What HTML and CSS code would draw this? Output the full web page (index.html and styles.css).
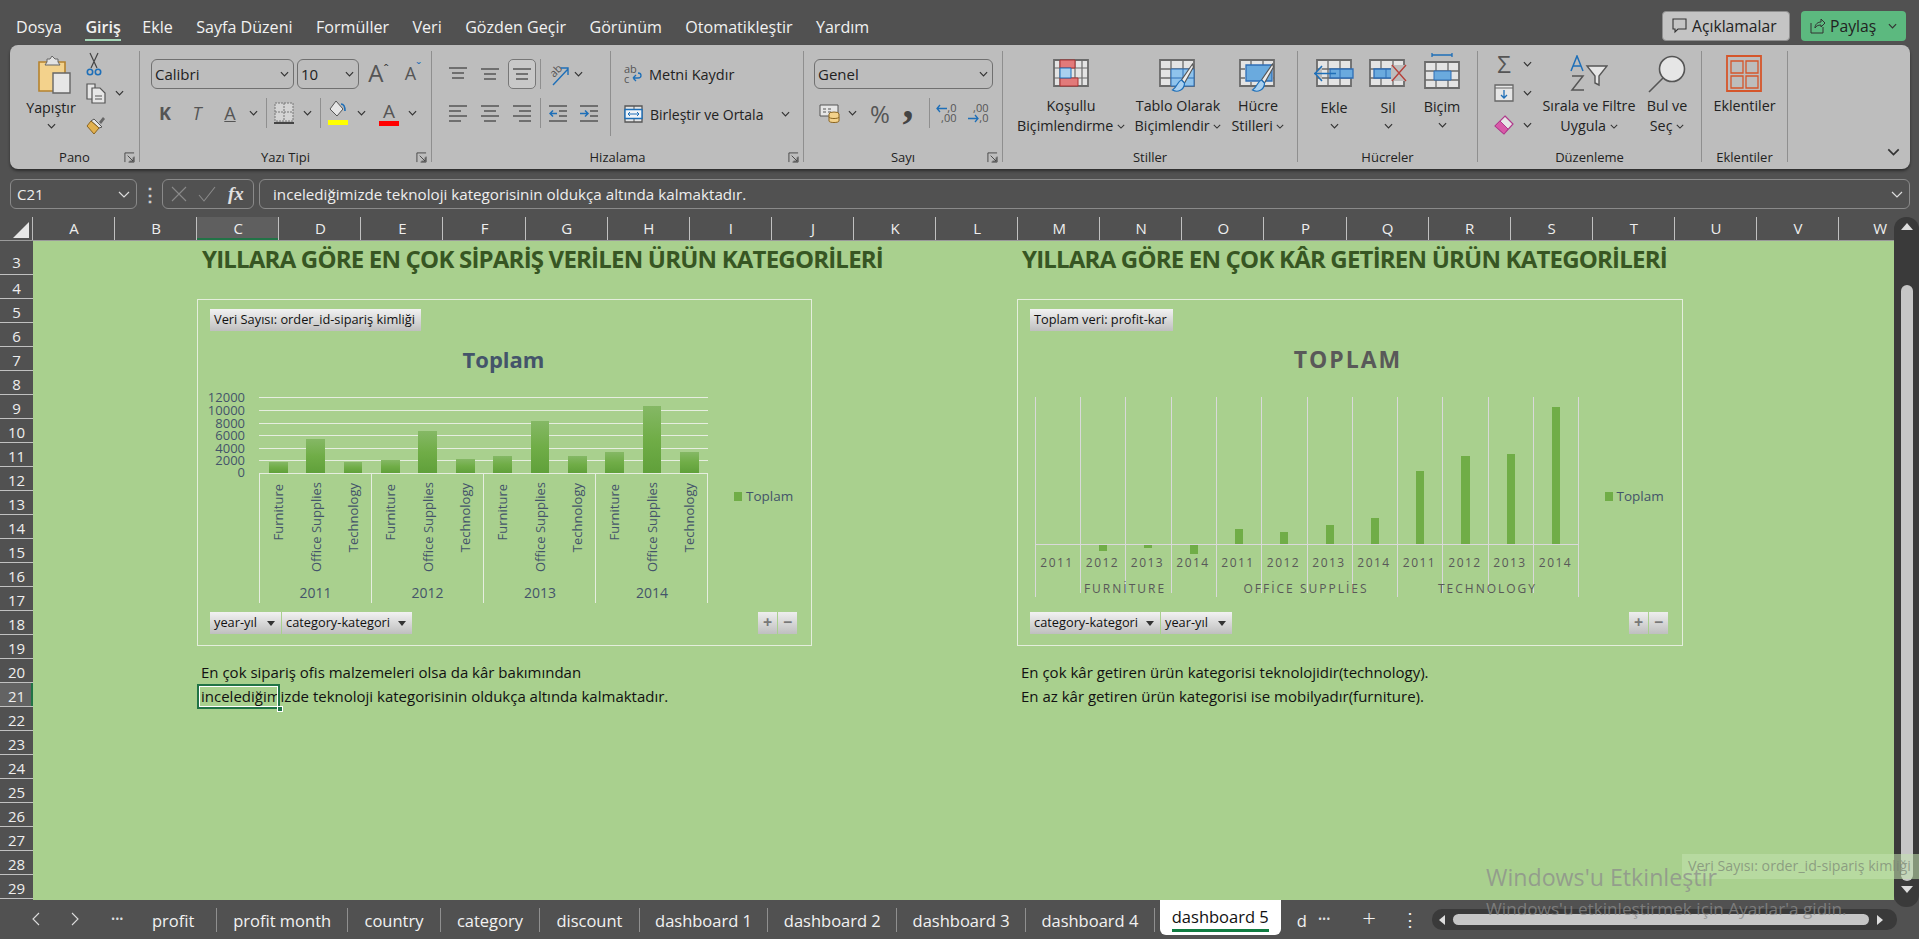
FILE: index.html
```html
<!DOCTYPE html>
<html lang="tr">
<head>
    <meta charset="UTF-8">
    <title>Excel - dashboard 5</title>
    <link rel="stylesheet" href="styles.css">
</head>
<body>
    <svg class="defs" width="0" height="0">
        <symbol id="chev" viewBox="0 0 10 6"><path d="M1 1l4 4 4-4" fill="none" stroke="#333" stroke-width="1.3"/></symbol>
        <symbol id="launch" viewBox="0 0 12 12"><path d="M1 11V1h10M11 5v6H5M4 4l6 6M10 6v4H6" fill="none" stroke="#444" stroke-width="1"/></symbol>
        <symbol id="al-top" viewBox="0 0 18 14"><path d="M0 1h18M3 6h12M3 11h12" stroke="#555" stroke-width="1.6"/></symbol>
        <symbol id="al-mid" viewBox="0 0 18 14"><path d="M0 2h18M3 7h12M3 12h12" stroke="#555" stroke-width="1.6"/></symbol>
        <symbol id="al-left" viewBox="0 0 18 17"><path d="M0 1h18M0 6h12M0 11h18M0 16h12" stroke="#555" stroke-width="1.6"/></symbol>
        <symbol id="al-center" viewBox="0 0 18 17"><path d="M0 1h18M3 6h12M0 11h18M3 16h12" stroke="#555" stroke-width="1.6"/></symbol>
        <symbol id="al-right" viewBox="0 0 18 17"><path d="M0 1h18M6 6h12M0 11h18M6 16h12" stroke="#555" stroke-width="1.6"/></symbol>
        <symbol id="cells" viewBox="0 0 36 28"><path fill="#e4e4e4" stroke="#6b6b6b" stroke-width="1.8" d="M1 1h34v26H1z"/><path d="M12 1v26M24 1v26M1 10h34M1 19h34" stroke="#6b6b6b" stroke-width="1.3"/></symbol>
        <symbol id="brush" viewBox="0 0 22 30"><path d="M21 1L10 17l3 3L22 4z" fill="#ececec" stroke="#555" stroke-width="1.1"/><path d="M10 17c-4 1-4 7-9 10 5 3 12 0 12-7z" fill="#a9d0f0" stroke="#1e6fb8" stroke-width="1.2"/></symbol>
    </svg>

    <!-- top menu -->
    <header class="topbar">
        <nav class="menu">
            <span>Dosya</span>
            <span class="menu-active">Giriş</span>
            <span>Ekle</span>
            <span>Sayfa Düzeni</span>
            <span>Formüller</span>
            <span>Veri</span>
            <span>Gözden Geçir</span>
            <span>Görünüm</span>
            <span>Otomatikleştir</span>
            <span>Yardım</span>
        </nav>
        <button class="btn-comments">
            <svg width="15" height="16" viewBox="0 0 15 16"><path d="M1 1h13v10H6l-3 3v-3H1z" fill="none" stroke="#333" stroke-width="1.1"/></svg>
            Açıklamalar
        </button>
        <button class="btn-share">
            <svg width="15" height="16" viewBox="0 0 15 16"><path d="M1 5v10h12V9M5 10c0-4 3-6 6-6V1l4 4-4 4V7c-3 0-5 1-6 3z" fill="none" stroke="#333" stroke-width="1"/></svg>
            Paylaş
            <svg class="share-chev" width="9" height="6"><use href="#chev"/></svg>
        </button>
    </header>

    <!-- ribbon -->
    <section class="ribbon">
        <div class="group g-pano">
            <div class="group-body pano-body">
                <div class="paste">
                    <svg width="33" height="39" viewBox="0 0 33 39">
                        <path d="M1 7h26v29H1z" fill="#f3d28c" stroke="#b5832f" stroke-width="1.6"/>
                        <path d="M9 7V4h3l2-3 3 3h3v3l2 3H7z" fill="#e2e2e2" stroke="#666"/>
                        <path d="M15 18h17v20H15z" fill="#e6e6e6" stroke="#666" stroke-width="1.4"/>
                    </svg>
                    <span class="tool-text">Yapıştır</span>
                    <svg class="chev-m" width="9" height="6"><use href="#chev"/></svg>
                </div>
                <div class="mini-col">
                    <div class="mini-row">
                        <svg width="16" height="24" viewBox="0 0 16 24"><path d="M4 1l7 15M12 1L5 16" stroke="#444" stroke-width="1.2"/><circle cx="4" cy="20" r="2.7" fill="none" stroke="#1e6fb8" stroke-width="1.6"/><circle cx="12" cy="20" r="2.7" fill="none" stroke="#1e6fb8" stroke-width="1.6"/></svg>
                    </div>
                    <div class="mini-row">
                        <svg width="20" height="21" viewBox="0 0 20 21"><path d="M1 1h8v15H1z" fill="#e6e6e6" stroke="#555" stroke-width="1.2"/><path d="M6 5h8l5 5v10H6z" fill="#e6e6e6" stroke="#555" stroke-width="1.2"/><path d="M9 13h7M9 16h7" stroke="#555"/></svg>
                        <svg class="chev-r" width="9" height="6"><use href="#chev"/></svg>
                    </div>
                    <div class="mini-row">
                        <svg width="20" height="20" viewBox="0 0 20 20"><path d="M13 7l4-5 2 2-4 5z" fill="#666"/><path d="M8 4l8 8-3 1-8-7z" fill="#e6e6e6" stroke="#555"/><path d="M5 6L1 11l7 8 5-6z" fill="#e2b14f" stroke="#8a6420"/></svg>
                    </div>
                </div>
            </div>
            <div class="group-label"><i></i><span>Pano</span><svg width="11" height="11"><use href="#launch"/></svg></div>
        </div>

        <div class="group g-font">
            <div class="group-body font-body">
                <div class="font-row1">
                    <div class="select font-name">Calibri<svg width="9" height="6"><use href="#chev"/></svg></div>
                    <div class="select font-size">10<svg width="9" height="6"><use href="#chev"/></svg></div>
                    <span class="grow">A<small>ˆ</small></span>
                    <span class="shrink">A<small>ˇ</small></span>
                </div>
                <div class="font-row2">
                    <b class="glyph">K</b>
                    <i class="glyph glyph-t">T</i>
                    <u class="glyph">A</u>
                    <svg width="9" height="6"><use href="#chev"/></svg>
                    <span class="vsep"></span>
                    <svg width="20" height="22" viewBox="0 0 20 22"><path d="M1 1h18v18H1zM10 1v18M1 10h18" fill="#d4d4d4" stroke="#777" stroke-dasharray="2 1"/><path d="M0 21h20" stroke="#444" stroke-width="2"/></svg>
                    <svg width="9" height="6"><use href="#chev"/></svg>
                    <span class="vsep"></span>
                    <svg width="20" height="26" viewBox="0 0 20 26"><path d="M8 1l7 8-6 7-7-7z" fill="#e6e6e6" stroke="#555"/><path d="M13 4c3 0 4 3 4 7" fill="none" stroke="#1e6fb8" stroke-width="1.6"/><path d="M0 20h20v5H0z" fill="#ffff00"/></svg>
                    <svg width="9" height="6"><use href="#chev"/></svg>
                    <span class="color-a">A</span>
                    <svg width="9" height="6"><use href="#chev"/></svg>
                </div>
            </div>
            <div class="group-label"><i></i><span>Yazı Tipi</span><svg width="11" height="11"><use href="#launch"/></svg></div>
        </div>

        <div class="group g-align">
            <div class="group-body align-body">
                <div class="align-left">
                    <div class="align-row align-row-1">
                        <svg width="18" height="14"><use href="#al-top"/></svg>
                        <svg width="18" height="14"><use href="#al-mid"/></svg>
                        <span class="align-on"><svg width="18" height="14"><use href="#al-mid"/></svg></span>
                        <span class="vsep"></span>
                        <svg class="icon-open" width="24" height="24" viewBox="0 0 24 24"><text class="icon-text" transform="translate(8 16) rotate(-45)">ab</text><path d="M7 23L22 7M15 6h7v7" fill="none" stroke="#1e6fb8" stroke-width="1.4"/></svg>
                        <svg width="9" height="6"><use href="#chev"/></svg>
                    </div>
                    <div class="align-row align-row-2">
                        <svg width="18" height="17"><use href="#al-left"/></svg>
                        <svg width="18" height="17"><use href="#al-center"/></svg>
                        <svg width="18" height="17"><use href="#al-right"/></svg>
                        <span class="vsep"></span>
                        <svg width="18" height="17" viewBox="0 0 18 17"><path d="M0 1h18M10 6h8M10 11h8M0 16h18" stroke="#555" stroke-width="1.6"/><path d="M8 8.500H1M4 5.500l-3 3 3 3" fill="none" stroke="#1e6fb8" stroke-width="1.5"/></svg>
                        <svg width="18" height="17" viewBox="0 0 18 17"><path d="M0 1h18M10 6h8M10 11h8M0 16h18" stroke="#555" stroke-width="1.6"/><path d="M0 8.500h7M5 5.500l3 3-3 3" fill="none" stroke="#1e6fb8" stroke-width="1.5"/></svg>
                    </div>
                </div>
                <div class="align-wrap">
                    <div class="wrap-row">
                        <svg class="icon-open" width="18" height="20" viewBox="0 0 18 20"><text class="icon-text" x="0" y="9">ab</text><text class="icon-text" x="0" y="19">c</text><path d="M9 14h5c4 0 4-5 0-5M9 14l3-3M9 14l3 3" fill="none" stroke="#1e6fb8" stroke-width="1.3"/></svg>
                        <span>Metni Kaydır</span>
                    </div>
                    <div class="wrap-row">
                        <svg width="19" height="18" viewBox="0 0 19 18"><path d="M1 1h17v16H1z" fill="#e4e4e4" stroke="#555" stroke-width="1.3"/><path d="M10 1v3M10 14v3" stroke="#555"/><path d="M1 4.500h17v9H1z" fill="#f0f4f8" stroke="#1e6fb8" stroke-width="1.4"/><path d="M4 9h11M6 7L4 9l2 2M13 7l2 2-2 2" fill="none" stroke="#1e6fb8"/></svg>
                        <span>Birleştir ve Ortala</span>
                        <svg class="merge-chev" width="9" height="6"><use href="#chev"/></svg>
                    </div>
                </div>
            </div>
            <div class="group-label"><i></i><span>Hizalama</span><svg width="11" height="11"><use href="#launch"/></svg></div>
        </div>

        <div class="group g-number">
            <div class="group-body number-body">
                <div class="select number-format">Genel<svg width="9" height="6"><use href="#chev"/></svg></div>
                <div class="number-row">
                    <svg width="21" height="20" viewBox="0 0 21 20"><path d="M1 2h18v11H1z" fill="#e6e6e6" stroke="#555"/><path d="M4 6h3M4 9h3M9 6h3M9 9h3" stroke="#555"/><ellipse cx="15" cy="11" rx="5" ry="2" fill="#f3d28c" stroke="#8a6420"/><path d="M10 11v7c0 2 10 2 10 0v-7M10 14c0 2 10 2 10 0" fill="#f3d28c" stroke="#8a6420"/></svg>
                    <svg width="9" height="6"><use href="#chev"/></svg>
                    <span class="percent">%</span>
                    <span class="comma">,</span>
                    <i></i>
                    <span class="vsep"></span>
                    <span class="decimals">
                        <svg width="11" height="9" viewBox="0 0 11 9"><path d="M11 4.500H1M4 1L1 4.500 4 8" fill="none" stroke="#1e6fb8" stroke-width="1.3"/></svg>
                        <b>,0</b>
                        <b class="dec-full">,00</b>
                    </span>
                    <span class="decimals">
                        <b class="dec-full">,00</b>
                        <svg width="11" height="9" viewBox="0 0 11 9"><path d="M0 4.500h10M7 1l3 3.500L7 8" fill="none" stroke="#1e6fb8" stroke-width="1.3"/></svg>
                        <b>,0</b>
                    </span>
                </div>
            </div>
            <div class="group-label"><i></i><span>Sayı</span><svg width="11" height="11"><use href="#launch"/></svg></div>
        </div>

        <div class="group g-styles">
            <div class="group-body styles-body">
                <div class="big-tool">
                    <div class="big-icon">
                        <svg width="36" height="28" viewBox="0 0 36 28"><path d="M1 1h34v26H1z" fill="#e4e4e4" stroke="#6b6b6b" stroke-width="1.8"/><path d="M7 1v26M22 1v26M29 1v26M1 9h34M1 19h34" stroke="#6b6b6b" stroke-width="1.2"/><path d="M7 1h15v8H7zM7 19h18v8H7z" fill="#e27a7a" stroke="#a33"/><path d="M7 9h11v10H7z" fill="#a9d0f0" stroke="#1e6fb8"/></svg>
                    </div>
                    <span class="tool-text">Koşullu</span>
                    <span class="tool-text">Biçimlendirme <svg width="8" height="5"><use href="#chev"/></svg></span>
                </div>
                <div class="big-tool">
                    <div class="big-icon">
                        <svg width="38" height="34" viewBox="0 0 38 34"><use href="#cells" width="36" height="28"/><path d="M12 10h23v17H12z" fill="#8fc3ec" stroke="#2f6eb5"/><path d="M24 10v17M12 19h23" stroke="#2f6eb5"/><use href="#brush" x="10" y="4" width="27" height="30"/></svg>
                    </div>
                    <span class="tool-text">Tablo Olarak</span>
                    <span class="tool-text">Biçimlendir <svg width="8" height="5"><use href="#chev"/></svg></span>
                </div>
                <div class="big-tool">
                    <div class="big-icon">
                        <svg width="38" height="34" viewBox="0 0 38 34"><use href="#cells" width="36" height="28"/><path d="M6 6h28v17H6z" fill="#e4e4e4"/><path d="M7 6h26v16H7z" fill="#6aaade" stroke="#2f6eb5" stroke-width="1.3"/><use href="#brush" x="10" y="4" width="27" height="30"/></svg>
                    </div>
                    <span class="tool-text">Hücre</span>
                    <span class="tool-text">Stilleri <svg width="8" height="5"><use href="#chev"/></svg></span>
                </div>
            </div>
            <div class="group-label"><i></i><span>Stiller</span><i></i></div>
        </div>

        <div class="group g-cells">
            <div class="group-body cells-body">
                <div class="cell-tool">
                    <div class="big-icon">
                        <svg width="40" height="28" viewBox="0 0 40 28"><use href="#cells" x="2" width="36" height="28"/><path d="M16 10h23v9H16z" fill="#6aaade" stroke="#2f6eb5" stroke-width="1.3"/><path d="M26 10v9" stroke="#2f6eb5"/><path d="M0 14.500h22M8 7l-7 7.500L8 22" fill="#bdbdbd" stroke="#1e6fb8" stroke-width="1.5"/></svg>
                    </div>
                    <span class="tool-text">Ekle</span>
                    <svg width="9" height="6"><use href="#chev"/></svg>
                </div>
                <div class="cell-tool">
                    <div class="big-icon">
                        <svg width="38" height="28" viewBox="0 0 38 28"><use href="#cells" width="36" height="28"/><path d="M5 10h21v9H5z" fill="#6aaade" stroke="#2f6eb5" stroke-width="1.3"/><path d="M17 10v9" stroke="#2f6eb5"/><path d="M22 6h15v16H22z" fill="#bdbdbd"/><path d="M23 6l14 16M37 6L23 22" stroke="#b5403a" stroke-width="1.4"/></svg>
                    </div>
                    <span class="tool-text">Sil</span>
                    <svg width="9" height="6"><use href="#chev"/></svg>
                </div>
                <div class="cell-tool cell-tool-format">
                    <svg width="36" height="37" viewBox="0 0 36 37"><path d="M8 1v4M28 1v4M8 3h20" stroke="#1e6fb8" stroke-width="1.3"/><use href="#cells" y="9" width="36" height="28"/><path d="M10 19h17v9H10z" fill="#6aaade" stroke="#2f6eb5"/></svg>
                    <span class="tool-text">Biçim</span>
                    <svg width="9" height="6"><use href="#chev"/></svg>
                </div>
            </div>
            <div class="group-label"><i></i><span>Hücreler</span><i></i></div>
        </div>

        <div class="group g-edit">
            <div class="group-body edit-body">
                <div class="mini-col edit-mini">
                    <div class="mini-row"><span class="sigma">Σ</span><svg class="chev-r" width="9" height="6"><use href="#chev"/></svg></div>
                    <div class="mini-row">
                        <svg width="20" height="18" viewBox="0 0 20 18"><path d="M1 1h18v16H1z" fill="#e6e6e6" stroke="#666" stroke-width="1.3"/><path d="M1 4h18" stroke="#666"/><path d="M10 6v8M7 11l3 3 3-3" fill="none" stroke="#1e6fb8" stroke-width="1.3"/></svg>
                        <svg class="chev-r" width="9" height="6"><use href="#chev"/></svg>
                    </div>
                    <div class="mini-row">
                        <svg width="20" height="20" viewBox="0 0 20 20"><path d="M11 1l8 8-9 10-9-8z" fill="#e6e6e6" stroke="#b03a8c" stroke-width="1.2"/><path d="M6 6l8 8-4 5-9-8z" fill="#d85aa8" stroke="#b03a8c"/></svg>
                        <svg class="chev-r" width="9" height="6"><use href="#chev"/></svg>
                    </div>
                </div>
                <div class="big-tool sort-tool">
                    <div class="big-icon icon-tall">
                        <svg width="38" height="36" viewBox="0 0 38 36"><path d="M1 16L7 1l6 15M3 11h8" fill="none" stroke="#1e6fb8" stroke-width="1.5"/><path d="M2 21h11L2 35h12" fill="none" stroke="#555" stroke-width="1.5"/><path d="M17 11h20l-8 10v9l-4-2v-7z" fill="#e6e6e6" stroke="#555" stroke-width="1.4"/></svg>
                    </div>
                    <span class="tool-text">Sırala ve Filtre</span>
                    <span class="tool-text">Uygula <svg width="8" height="5"><use href="#chev"/></svg></span>
                </div>
                <div class="big-tool find-tool">
                    <div class="big-icon icon-tall">
                        <svg width="38" height="38" viewBox="0 0 38 38"><circle cx="24" cy="14" r="12.500" fill="#e6e6e6" stroke="#555" stroke-width="1.6"/><path d="M15 23L1 37" stroke="#555" stroke-width="1.6"/></svg>
                    </div>
                    <span class="tool-text">Bul ve</span>
                    <span class="tool-text">Seç <svg width="8" height="5"><use href="#chev"/></svg></span>
                </div>
            </div>
            <div class="group-label"><i></i><span>Düzenleme</span><i></i></div>
        </div>

        <div class="group g-addins">
            <div class="group-body addins-body">
                <div class="big-tool">
                    <div class="big-icon icon-tall">
                        <svg width="36" height="37" viewBox="0 0 36 37"><path d="M1 1h34v35H1z" fill="none" stroke="#d5562b" stroke-width="1.8"/><path d="M5 6h12v12H5zM20 6h12v12H20zM5 21h12v12H5zM20 21h12v12H20z" fill="none" stroke="#d5562b" stroke-width="1.3"/></svg>
                    </div>
                    <span class="tool-text">Eklentiler</span>
                </div>
            </div>
            <div class="group-label"><i></i><span>Eklentiler</span><i></i></div>
        </div>

        <svg class="ribbon-collapse" width="13" height="8"><use href="#chev" width="13" height="8"/></svg>
    </section>

    <!-- formula bar -->
    <section class="formula-row">
        <div class="name-box">C21<svg width="12" height="7"><path d="M1 1l5 5 5-5" fill="none" stroke="#ddd" stroke-width="1.2"/></svg></div>
        <div class="dots">⋮</div>
        <div class="fx-box">
            <svg width="16" height="16" viewBox="0 0 16 16"><path d="M1 1l14 14M15 1L1 15" stroke="#8a8a8a" stroke-width="1.1"/></svg>
            <svg width="18" height="16" viewBox="0 0 18 16"><path d="M1 9l5 6L17 1" fill="none" stroke="#8a8a8a" stroke-width="1.1"/></svg>
            <em>fx</em>
        </div>
        <div class="formula-input">
            <span>incelediğimizde teknoloji kategorisinin oldukça altında kalmaktadır.</span>
            <svg width="12" height="7"><path d="M1 1l5 5 5-5" fill="none" stroke="#ddd" stroke-width="1.2"/></svg>
        </div>
    </section>

    <!-- column headers -->
    <section class="col-heads">
        <div class="corner"><span></span></div>
        <div class="col">A</div><div class="col">B</div><div class="col col-on">C</div><div class="col">D</div>
        <div class="col">E</div><div class="col">F</div><div class="col">G</div><div class="col">H</div>
        <div class="col">I</div><div class="col">J</div><div class="col">K</div><div class="col">L</div>
        <div class="col">M</div><div class="col">N</div><div class="col">O</div><div class="col">P</div>
        <div class="col">Q</div><div class="col">R</div><div class="col">S</div><div class="col">T</div>
        <div class="col">U</div><div class="col">V</div><div class="col">W</div>
    </section>

    <section class="grid-area">
        <div class="row-heads">
            <div class="row row-first">3</div><div class="row">4</div><div class="row">5</div><div class="row">6</div>
            <div class="row">7</div><div class="row">8</div><div class="row">9</div><div class="row">10</div>
            <div class="row">11</div><div class="row">12</div><div class="row">13</div><div class="row">14</div>
            <div class="row">15</div><div class="row">16</div><div class="row">17</div><div class="row">18</div>
            <div class="row">19</div><div class="row">20</div><div class="row row-on">21</div><div class="row">22</div>
            <div class="row">23</div><div class="row">24</div><div class="row">25</div><div class="row">26</div>
            <div class="row">27</div><div class="row">28</div><div class="row">29</div>
        </div>

        <div class="sheet">
            <div class="panel">
                <h2 class="panel-title">YILLARA GÖRE EN ÇOK SİPARİŞ VERİLEN ÜRÜN KATEGORİLERİ</h2>
                <div class="chart chart-left">
                    <div class="field-row"><span class="field field-left">Veri Sayısı: order_id-sipariş kimliği</span></div>
                    <svg class="plot" width="612" height="281" viewBox="198 331 612 281">
                        <defs>
                            <linearGradient id="barfill" x1="0" y1="0" x2="0" y2="1">
                                <stop offset="0" stop-color="#85b865"/>
                                <stop offset=".5" stop-color="#70ad47"/>
                                <stop offset="1" stop-color="#60a03a"/>
                            </linearGradient>
                        </defs>
                        <text class="t-title" x="503.500" y="368">Toplam</text>
                        <g class="gridlines">
                            <path d="M259 397.500H708M259 410.500H708M259 423.500H708M259 435.500H708M259 448.500H708M259 460.500H708"/>
                            <path d="M259 473.500H708M259.500 473V603M371.500 473V603M483.500 473V603M595.500 473V603M707.500 473V603"/>
                        </g>
                        <g class="t-axis">
                            <text x="245" y="402">12000</text>
                            <text x="245" y="415">10000</text>
                            <text x="245" y="428">8000</text>
                            <text x="245" y="440">6000</text>
                            <text x="245" y="453">4000</text>
                            <text x="245" y="465">2000</text>
                            <text x="245" y="477">0</text>
                        </g>
                        <g fill="url(#barfill)">
                            <rect x="269" y="462" width="19" height="11"/>
                            <rect x="306" y="439" width="19" height="34"/>
                            <rect x="344" y="462" width="18" height="11"/>
                            <rect x="381" y="460" width="19" height="13"/>
                            <rect x="418" y="431" width="19" height="42"/>
                            <rect x="456" y="459" width="19" height="14"/>
                            <rect x="493" y="456" width="19" height="17"/>
                            <rect x="531" y="421" width="18" height="52"/>
                            <rect x="568" y="456" width="19" height="17"/>
                            <rect x="605" y="452" width="19" height="21"/>
                            <rect x="643" y="406" width="18" height="67"/>
                            <rect x="680" y="452" width="19" height="21"/>
                        </g>
                        <g class="t-cat">
                            <text transform="translate(283 484) rotate(-90)">Furniture</text>
                            <text transform="translate(321 482) rotate(-90)">Office Supplies</text>
                            <text transform="translate(358 483) rotate(-90)">Technology</text>
                            <text transform="translate(395 484) rotate(-90)">Furniture</text>
                            <text transform="translate(433 482) rotate(-90)">Office Supplies</text>
                            <text transform="translate(470 483) rotate(-90)">Technology</text>
                            <text transform="translate(507 484) rotate(-90)">Furniture</text>
                            <text transform="translate(545 482) rotate(-90)">Office Supplies</text>
                            <text transform="translate(582 483) rotate(-90)">Technology</text>
                            <text transform="translate(619 484) rotate(-90)">Furniture</text>
                            <text transform="translate(657 482) rotate(-90)">Office Supplies</text>
                            <text transform="translate(694 483) rotate(-90)">Technology</text>
                        </g>
                        <g class="t-year">
                            <text x="315.500" y="598">2011</text>
                            <text x="427.500" y="598">2012</text>
                            <text x="540" y="598">2013</text>
                            <text x="652" y="598">2014</text>
                        </g>
                        <rect x="734" y="492" width="8" height="9" fill="#70ad47"/>
                        <text class="t-legend" x="746" y="501">Toplam</text>
                    </svg>
                    <div class="field-row field-row-bottom">
                        <span class="field field-year">year-yıl<i class="arrow"></i></span>
                        <span class="field field-cat">category-kategori<i class="arrow"></i></span>
                        <span class="zoom-btns"><span class="zoom-btn">+</span><span class="zoom-btn">−</span></span>
                    </div>
                </div>
                <p class="note">En çok sipariş ofis malzemeleri olsa da kâr bakımından<br>incelediğimizde teknoloji kategorisinin oldukça altında kalmaktadır.</p>
            </div>

            <div class="panel">
                <h2 class="panel-title">YILLARA GÖRE EN ÇOK KÂR GETİREN ÜRÜN KATEGORİLERİ</h2>
                <div class="chart chart-right">
                    <div class="field-row"><span class="field field-total">Toplam veri: profit-kar</span></div>
                    <svg class="plot" width="664" height="281" viewBox="1018 331 664 281">
                        <text class="t-title t-title-caps" x="1348" y="368">TOPLAM</text>
                        <g class="gridlines gridlines-v">
                            <path d="M1035.500 397V597M1080.500 397V593M1125.500 397V593M1171.500 397V593M1216.500 397V597M1261.500 397V593M1307.500 397V593M1352.500 397V593M1397.500 397V597M1442.500 397V593M1488.500 397V593M1533.500 397V593M1578.500 397V597"/>
                            <path d="M1035 544.500H1579"/>
                        </g>
                        <g fill="#70ad47">
                            <rect x="1099" y="545" width="8" height="6"/>
                            <rect x="1144" y="545" width="8" height="3"/>
                            <rect x="1190" y="545" width="8" height="9"/>
                            <rect x="1235" y="529" width="8" height="15"/>
                            <rect x="1280" y="532" width="8" height="12"/>
                            <rect x="1326" y="525" width="8" height="19"/>
                            <rect x="1371" y="518" width="8" height="26"/>
                            <rect x="1416" y="471" width="8" height="73"/>
                            <rect x="1461" y="456" width="9" height="88"/>
                            <rect x="1507" y="454" width="8" height="90"/>
                            <rect x="1552" y="407" width="8" height="137"/>
                        </g>
                        <g class="t-year-caps">
                            <text x="1057" y="567">2011</text>
                            <text x="1102.500" y="567">2012</text>
                            <text x="1147.500" y="567">2013</text>
                            <text x="1193" y="567">2014</text>
                            <text x="1238" y="567">2011</text>
                            <text x="1283.500" y="567">2012</text>
                            <text x="1329" y="567">2013</text>
                            <text x="1374" y="567">2014</text>
                            <text x="1419.500" y="567">2011</text>
                            <text x="1465" y="567">2012</text>
                            <text x="1510" y="567">2013</text>
                            <text x="1555.500" y="567">2014</text>
                        </g>
                        <g class="t-group-caps">
                            <text x="1125" y="593">FURNİTURE</text>
                            <text x="1306" y="593">OFFİCE SUPPLİES</text>
                            <text x="1487.500" y="593">TECHNOLOGY</text>
                        </g>
                        <rect x="1605" y="492" width="8" height="9" fill="#70ad47"/>
                        <text class="t-legend" x="1616.500" y="501">Toplam</text>
                    </svg>
                    <div class="field-row field-row-bottom">
                        <span class="field field-cat">category-kategori<i class="arrow"></i></span>
                        <span class="field field-year">year-yıl<i class="arrow"></i></span>
                        <span class="zoom-btns"><span class="zoom-btn">+</span><span class="zoom-btn">−</span></span>
                    </div>
                </div>
                <p class="note">En çok kâr getiren ürün kategorisi teknolojidir(technology).<br>En az kâr getiren ürün kategorisi ise mobilyadır(furniture).</p>
            </div>

            <div class="cell-cursor"><span class="cell-handle"></span></div>
        </div>
    </section>

    <!-- sheet tabs -->
    <footer class="tabbar">
        <div class="tab-nav">
            <svg width="9" height="14" viewBox="0 0 9 14"><path d="M8 1L2 7l6 6" fill="none" stroke="#ddd" stroke-width="1.1"/></svg>
            <svg width="9" height="14" viewBox="0 0 9 14"><path d="M1 1l6 6-6 6" fill="none" stroke="#ddd" stroke-width="1.1"/></svg>
            <span class="tab-more">•••</span>
        </div>
        <span class="tab tab-first">profit</span>
        <span class="tab">profit month</span>
        <span class="tab">country</span>
        <span class="tab">category</span>
        <span class="tab">discount</span>
        <span class="tab tab-dash">dashboard 1</span>
        <span class="tab tab-dash">dashboard 2</span>
        <span class="tab tab-dash">dashboard 3</span>
        <span class="tab tab-dash">dashboard 4</span>
        <span class="tab-active"><span>dashboard 5</span></span>
        <span class="tab tab-clip">d</span>
        <span class="tab-more">•••</span>
        <span class="tab-add">+</span>
        <span class="tab-kebab">⋮</span>
        <div class="hscroll">
            <i class="tri-left"></i>
            <span class="hscroll-thumb"></span>
            <i class="tri-right"></i>
        </div>
    </footer>

    <!-- overlays -->
    <div class="vscroll">
        <i class="tri-up"></i>
        <span class="vscroll-thumb"></span>
        <i class="tri-down"></i>
    </div>
    <div class="hover-tip">Veri Sayısı: order_id-sipariş kimliği</div>
    <div class="activate">
        <div class="activate-big">Windows'u Etkinleştir</div>
        <div class="activate-small">Windows'u etkinleştirmek için Ayarlar'a gidin.</div>
    </div>
</body>
</html>
```

FILE: styles.css
```css
* { box-sizing: border-box; }
html, body { margin: 0; padding: 0; }
body { width: 1919px; height: 939px; overflow: hidden; position: relative; background: #515151; font-family: "Open Sans", "Noto Sans", sans-serif; color: #222; }
.defs { position: absolute; }
svg { display: block; flex: none; }
.icon-text { font: 11px "Open Sans", sans-serif; fill: #555; }
.icon-open { overflow: visible; }

/* top menu */
.topbar { height: 45px; display: flex; align-items: flex-start; padding-left: 16px; }
.menu { display: flex; gap: 23.400px; color: #f2f2f2; font-size: 16.100px; line-height: 22px; padding-top: 16px; flex: 1; }
.menu-active { font-weight: 600; margin-right: -2px; }
.menu-active::after { content: ""; display: block; height: 2px; background: #a5d6b8; margin-top: 1px; }
.btn-comments, .btn-share { height: 30px; margin-top: 11px; border-radius: 4px; display: flex; align-items: center; gap: 5px; font: 15.700px "Open Sans", sans-serif; color: #222; padding: 0 9px; }
.btn-comments { width: 128px; background: #c4c4c4; border: 1px solid #8f8f8f; white-space: nowrap; }
.btn-share { width: 105px; background: #5cb97f; border: 0; margin: 11px 13px 0 11px; }
.share-chev { margin-left: auto; }

/* ribbon */
.ribbon { height: 124px; margin: 0 9px 0 10px; padding-top: 6px; background: #bdbdbd; border-radius: 8px; display: flex; box-shadow: 0 2px 3px rgba(0, 0, 0, .45); position: relative; }
.group { height: 111px; border-right: 1px solid #8f8f8f; flex: none; }
.g-pano { width: 130px; }
.g-font { width: 292px; }
.g-align { width: 372px; }
.g-number { width: 199px; }
.g-styles { width: 295px; }
.g-cells { width: 180px; }
.g-edit { width: 224px; }
.g-addins { width: 86px; }
.group-body { height: 97px; display: flex; font-size: 14px; }
.group-label { display: grid; grid-template-columns: 1fr auto 1fr; align-items: center; height: 12px; font-size: 13px; color: #222; }
.group-label svg { justify-self: end; margin-right: 4px; }
.tool-text { display: block; font-size: 14.300px; line-height: 20px; white-space: nowrap; color: #222; }
.tool-text svg { display: inline-block; vertical-align: 2px; }
.vsep { width: 1px; height: 30px; background: #8f8f8f; }

/* pano */
.pano-body { padding-left: 16px; }
.paste { width: 50px; display: flex; flex-direction: column; align-items: center; padding-top: 4px; }
.paste svg:first-child { margin-bottom: 4px; margin-left: 7px; }
.chev-m { margin-top: 5px; }
.mini-col { display: flex; flex-direction: column; }
.pano-body .mini-col { margin-left: 10px; }
.mini-row { height: 32px; display: flex; align-items: center; }
.mini-row:first-child { height: 26px; }
.chev-r { margin-left: 9px; }

/* yazi tipi */
.font-body { flex-direction: column; padding: 8px 0 0 11px; }
.font-row1 { display: grid; grid-template-columns: 143px 62px 33px 30px; grid-template-rows: 30px; column-gap: 3px; height: 30px; align-items: center; }
.select { height: 30px; border: 1px solid #707070; border-radius: 6px; display: flex; align-items: center; justify-content: space-between; padding: 0 4px 0 3px; font-size: 15px; }
.grow, .shrink { color: #555; text-align: center; height: 30px; line-height: 28px; }
.grow { font-size: 24px; }
.shrink { font-size: 18px; }
.grow small, .shrink small { font-size: 13px; line-height: 0; color: #333; vertical-align: 8px; }
.shrink small { color: #1e6fb8; }
.font-row2 { display: grid; grid-template-columns: 22px 42px 24px 22px 4px 31px 16px 10px 26px 20px 36px 10px; margin: 5px 0 0 3px; height: 38px; align-items: center; justify-items: center; }
.glyph { font-size: 18px; color: #555; font-style: normal; }
.glyph-t { font-style: italic; }
.color-a { font-size: 19px; color: #555; line-height: 19px; border-bottom: 5px solid #f00; width: 20px; text-align: center; margin-bottom: -1px; }

/* hizalama */
.align-body { padding-left: 10px; }
.align-left { width: 169px; padding-top: 8px; border-right: 1px solid #8f8f8f; height: 85px; }
.align-row { display: grid; height: 38px; align-items: center; justify-items: center; }
.align-row-1 { grid-template-columns: 32px 32px 32px 4px 32px 8px; height: 30px; }
.align-row-2 { grid-template-columns: 32px 32px 32px 4px 31px 32px; margin-top: 5px; }
.align-on { width: 28px; height: 30px; border: 1px solid #777; border-radius: 5px; background: #c8c8c8; display: flex; align-items: center; justify-content: center; }
.align-wrap { padding: 3px 0 0 13px; display: flex; flex-direction: column; flex: 1; }
.wrap-row { display: flex; align-items: center; gap: 7px; height: 40px; font-size: 14px; white-space: nowrap; }
.wrap-row:first-child span { font-size: 14.500px; }
.merge-chev { margin-left: 11px; }

/* sayi */
.number-body { flex-direction: column; padding: 8px 0 0 10px; }
.number-format { width: 179px; }
.number-row { display: grid; grid-template-columns: 30px 16px 40px 16px 11px 4px 30px 34px; margin-top: 5px; height: 38px; align-items: center; justify-items: center; }
.percent { font-size: 24px; color: #555; }
.comma { font: 700 44px/20px "Liberation Serif", serif; color: #444; margin-top: -18px; }
.decimals { display: grid; grid-template-columns: 11px 10px; align-items: center; justify-items: end; font-size: 11px; line-height: 10px; color: #555; }
.decimals b { font-weight: 400; }
.dec-full { grid-column: 1 / 3; }

/* stiller, hucreler */
.styles-body { padding-left: 9px; }
.big-tool { display: flex; flex-direction: column; align-items: center; flex: none; }
.styles-body .big-tool:nth-child(1) { width: 118px; }
.styles-body .big-tool:nth-child(2) { width: 96px; }
.styles-body .big-tool:nth-child(3) { width: 64px; }
.big-icon { height: 45px; padding-top: 8px; }
.icon-tall { padding-top: 4px; }
.cells-body { padding-left: 9px; }
.cell-tool { width: 54px; display: flex; flex-direction: column; align-items: center; }
.cell-tool .big-icon { height: 47px; }
.cell-tool-format { padding-top: 1px; }
.cell-tool-format .tool-text { margin-top: 8px; }
.cell-tool > svg:last-child { margin-top: 5px; }

/* duzenleme */
.edit-mini { width: 60px; padding-left: 16px; }
.sigma { font-size: 24px; color: #555; line-height: 26px; width: 20px; text-align: center; }
.sort-tool { width: 102px; }
.find-tool { width: 54px; }
.sort-tool .big-icon, .find-tool .big-icon { padding-top: 4px; }
.addins-body { justify-content: center; }
.ribbon-collapse { position: absolute; right: 10px; top: 103px; }

/* formula bar */
.formula-row { display: flex; height: 30px; margin: 10px 9px 0 10px; color: #eee; }
.name-box, .fx-box, .formula-input { border: 1px solid #8a8a8a; border-radius: 6px; height: 30px; display: flex; align-items: center; }
.name-box { width: 127px; padding: 0 6px; justify-content: space-between; font-size: 15px; }
.dots { width: 25px; text-align: center; font-size: 18px; line-height: 30px; font-weight: bold; color: #ccc; }
.fx-box { width: 92px; padding-left: 8px; gap: 11px; }
.fx-box em { font: italic 700 19px "Liberation Serif", serif; color: #e0e0e0; margin-left: 1px; }
.formula-input { flex: 1; margin-left: 5px; padding: 0 6px 0 13px; justify-content: space-between; font-size: 15.200px; }

/* headers */
.col-heads { display: flex; height: 23px; margin-top: 8px; color: #eee; font-size: 15px; line-height: 23px; }
.corner { width: 33px; flex: none; position: relative; border-right: 1px solid #bbb; }
.corner span { position: absolute; right: 3px; bottom: 2px; width: 0; height: 0; border-left: 16px solid transparent; border-bottom: 16px solid #e6e6e6; }
.col { width: 82.100px; flex: none; padding-left: 1px; text-align: center; border-right: 1px solid #c0c0c0; }
.col-on { background: #5f5f5f; box-shadow: inset 0 -2px 0 #217346; }

.grid-area { display: flex; height: 660px; border-top: 1px solid #9a9a9a; width: 1894px; }
.row-heads { width: 33px; color: #eee; font-size: 15px; flex: none; }
.row { height: 24px; line-height: 27px; text-align: center; border-bottom: 1px solid #c0c0c0; overflow: hidden; }
.row-first { height: 34px; line-height: 43px; }
.row-on { background: #636363; box-shadow: inset -2px 0 0 #217346; }

/* sheet */
.sheet { flex: 1; background: #a9d08e; display: grid; grid-template-columns: 820px 1fr; padding-left: 164px; position: relative; align-content: start; }
.panel-title { margin: 0; height: 37px; padding-left: 5px; font-size: 24px; line-height: 36px; font-weight: 700; color: #375623; white-space: nowrap; letter-spacing: -.8px; }
.chart { margin-top: 21px; height: 347px; border: 1px solid #e4eedc; position: relative; padding-top: 9px; }
.chart-left { width: 615px; }
.chart-right { width: 666px; }
.field-row { display: flex; height: 22px; padding-left: 12px; }
.field-row-bottom { gap: 1px; }
.field { height: 22px; background: linear-gradient(#f2f2f2, #bfbfbf); color: #111; font-size: 12.800px; line-height: 21px; padding-left: 4px; position: relative; white-space: nowrap; display: block; }
.field-left { width: 211px; }
.field-total { width: 143px; }
.field-year { width: 71px; }
.field-cat { width: 130px; }
.arrow { position: absolute; right: 6px; top: 9px; width: 0; height: 0; border: 4.500px solid transparent; border-top: 5px solid #333; border-bottom: 0; }
.zoom-btns { margin-left: auto; margin-right: 14px; display: flex; gap: 1px; }
.zoom-btn { width: 19px; height: 22px; background: linear-gradient(#eee, #bfbfbf); color: #777; font-weight: 700; font-size: 16px; line-height: 21px; text-align: center; }
.plot text { font-family: "Open Sans", sans-serif; }
.t-title { font-size: 22px; font-weight: 700; fill: #44546a; text-anchor: middle; }
.t-title-caps { fill: #595959; font-size: 23px; letter-spacing: 2px; }
.gridlines path { stroke: #e6eee0; stroke-width: 1; fill: none; }
.gridlines-v path { stroke: #d9d9d9; }
.t-axis text { font-size: 13px; fill: #44546a; text-anchor: end; }
.t-cat text { font-size: 13px; fill: #44546a; text-anchor: end; }
.t-year text { font-size: 14px; fill: #44546a; text-anchor: middle; }
.t-legend { font-size: 13.500px; fill: #44546a; }
.t-year-caps text { font-size: 12px; fill: #595959; text-anchor: middle; letter-spacing: 1.500px; }
.t-group-caps text { font-size: 12px; fill: #595959; text-anchor: middle; letter-spacing: 2px; }
.note { margin: 14px 0 0; padding-left: 4px; font-size: 15px; line-height: 24px; color: #111; white-space: nowrap; }
.cell-cursor { position: absolute; left: 164px; top: 443px; width: 83px; height: 25px; border: 2px solid #217346; box-shadow: inset 0 0 0 1px #fff; }
.cell-handle { position: absolute; right: -5px; bottom: -5px; width: 6px; height: 6px; background: #217346; border: 1px solid #fff; }

/* tabs */
.tabbar { height: 39px; display: flex; align-items: flex-start; color: #f2f2f2; font-size: 16.500px; }
.tab-nav { width: 136px; flex: none; display: flex; align-items: center; gap: 31px; padding: 12px 0 0 31px; }
.tab-more { font-size: 11px; line-height: 14px; color: #ddd; white-space: nowrap; }
.tab { height: 24px; margin-top: 8px; padding: 0 16.200px; border-right: 1px solid #8f8f8f; line-height: 25px; white-space: nowrap; flex: none; }
.tab-first { width: 81px; padding: 0 0 0 16px; }
.tab-dash { padding: 0 15.400px; }
.tab-active { height: 35px; margin-left: 5px; background: #fff; border-radius: 0 0 6px 6px; padding: 4px 12px 0; color: #111; line-height: 26px; white-space: nowrap; flex: none; }
.tab-active span { display: block; border-bottom: 3px solid #107c41; height: 28px; }
.tab-clip { margin-left: 0; padding: 0 4px 0 16px; border: 0; }
.tabbar > .tab-more { margin: 12px 0 0 7px; }
.tab-add { font-size: 24px; font-weight: 300; line-height: 36px; margin-left: 32px; }
.tab-kebab { font-size: 18px; line-height: 38px; margin-left: 25px; font-weight: 400; }
.hscroll { margin: 9px 22px 0 auto; width: 465px; height: 21px; background: #3a3a3a; border-radius: 10px; display: flex; align-items: center; padding: 0 7px; flex: none; }
.hscroll-thumb { width: 416px; height: 11px; border-radius: 6px; background: #c6c6c6; margin: 0 8px; }
.tri-left { width: 0; height: 0; border: 5px solid transparent; border-right: 6px solid #ddd; border-left: 0; }
.tri-right { width: 0; height: 0; border: 5px solid transparent; border-left: 6px solid #ddd; border-right: 0; }

/* overlays */
.vscroll { position: absolute; right: 0; top: 217px; width: 25px; height: 690px; background: #3a3a3a; border-radius: 12px; display: flex; flex-direction: column; align-items: center; padding: 6px 0; }
.vscroll-thumb { width: 12px; height: 596px; margin: 55px 0 5px; border-radius: 6px; background: #c6c6c6; }
.tri-up { width: 0; height: 0; border: 6px solid transparent; border-bottom: 7px solid #ddd; border-top: 0; }
.tri-down { width: 0; height: 0; border: 6px solid transparent; border-top: 7px solid #ddd; border-bottom: 0; }
.hover-tip { position: absolute; left: 1682px; top: 854px; width: 237px; height: 25px; padding-left: 6px; background: rgba(195, 225, 175, .55); color: rgba(120, 130, 115, .7); font-size: 14.200px; line-height: 24px; white-space: nowrap; overflow: hidden; }
.activate { position: absolute; left: 1486px; top: 861px; color: rgba(140, 140, 140, .75); pointer-events: none; white-space: nowrap; }
.activate-big { font-size: 23.200px; line-height: 32px; }
.activate-small { font-size: 17.200px; line-height: 22px; margin-top: 5px; }
```
